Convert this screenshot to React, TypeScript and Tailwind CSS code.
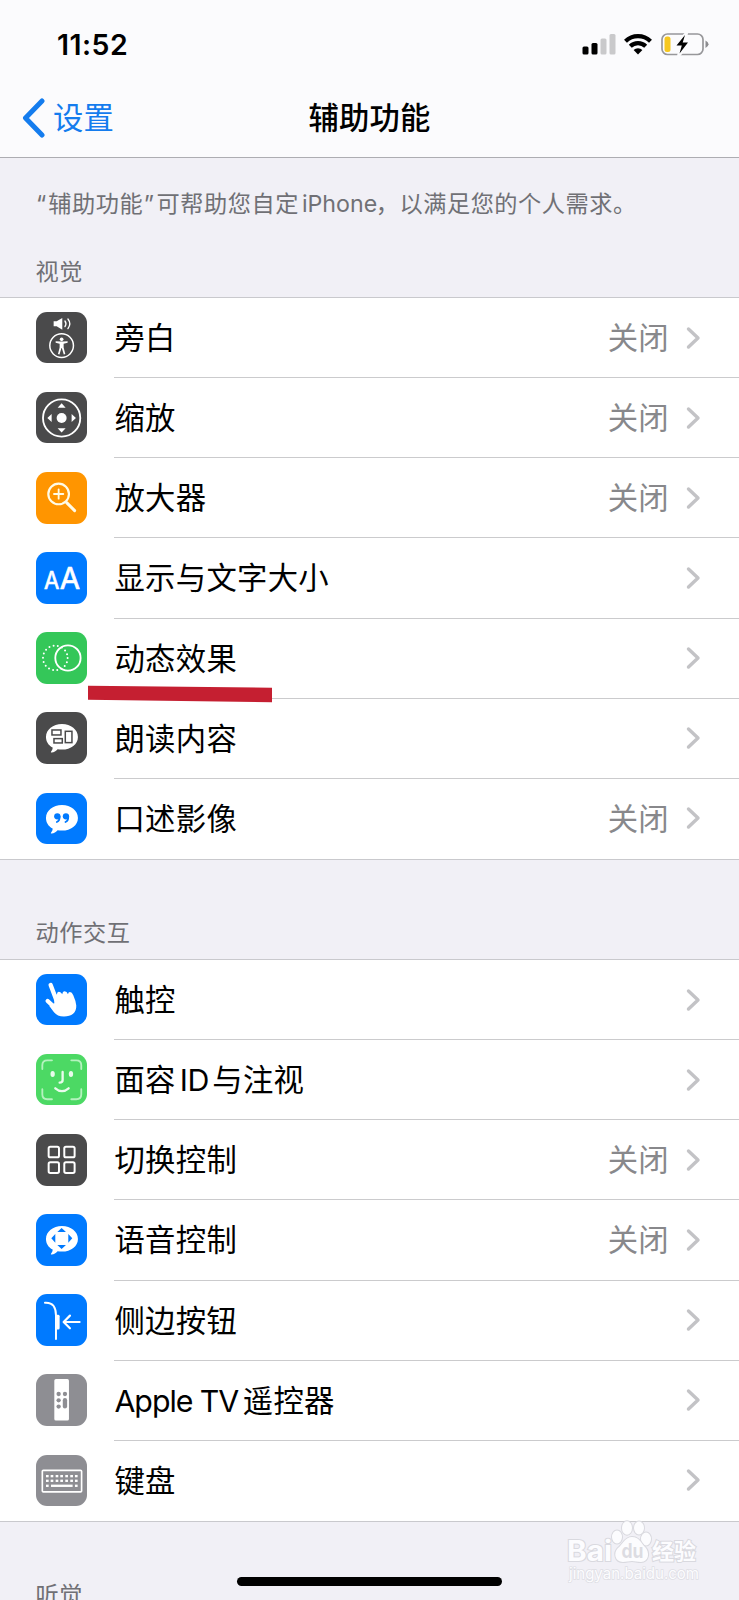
import type { ReactNode } from "react";
import clsx from "clsx";

interface SettingsRow {
  id: string;
  label: ReactNode;
  icon: ReactNode;
  iconClass: string;
  value?: string;
}

const DARK = "bg-[#4a4a4b]";
const BLUE = "bg-[#007aff]";
const GRAY = "bg-[#8e8e93]";

function Glyph({ children }: { children: ReactNode }) {
  return (
    <svg viewBox="0 0 155 155" className="size-full" fill="none" stroke="none">
      {children}
    </svg>
  );
}

function Bubble() {
  return (
    <path
      fill="#fff"
      d="M78 36C105 36 126 53 126 75s-21 38-48 38c-5 0-9 0-13-1-5 5-11 9-18 10-3 0-3-2-1-4 3-3 4-7 4-11C37 100 30 88 30 75c0-22 21-39 48-39Z"
    />
  );
}

const voiceOverIcon = (
  <Glyph>
    <path fill="#fff" d="M53 28h9l17-10v35L62 43h-9Z" />
    <path stroke="#fff" strokeWidth="4" strokeLinecap="round" d="M87 27q6 8 0 17M96 21q11 14 0 29" />
    <circle cx="77" cy="101" r="35.5" stroke="#fff" strokeWidth="4.500" />
    <circle cx="77" cy="82" r="5.500" fill="#fff" />
    <path fill="#fff" d="M59 88l14 1h8l14-1v4.500l-12 3v11l5 20-4.500 1-6-19h-1l-6 19-4.500-1 5-20v-11l-12-3Z" />
  </Glyph>
);

const zoomIcon = (
  <Glyph>
    <circle cx="77" cy="78" r="56" stroke="#fff" strokeWidth="5.500" />
    <circle cx="77" cy="78" r="15" fill="#fff" />
    <path fill="#fff" d="M77 34l12 13H65ZM77 122l12-13H65ZM34 78l13-12v24ZM120 78l-13-12v24Z" />
  </Glyph>
);

const magnifierIcon = (
  <Glyph>
    <circle cx="68" cy="66" r="31" stroke="#fffbe6" strokeWidth="6.500" />
    <path stroke="#fffbe6" strokeWidth="9" strokeLinecap="round" d="M92 92l24 24" />
    <path stroke="#fffbe6" strokeWidth="5.500" strokeLinecap="round" d="M54 66h28M68 52v28" />
  </Glyph>
);

const textSizeIcon = (
  <Glyph>
    <g fill="#fff" stroke="#fff" strokeWidth="2" className="font-['Inter'] tracking-normal">
      <text x="24" y="110" fontSize="71" textLength="46" lengthAdjust="spacingAndGlyphs">A</text>
      <text x="71" y="110" fontSize="89" textLength="61" lengthAdjust="spacingAndGlyphs">A</text>
    </g>
  </Glyph>
);

const motionIcon = (
  <Glyph>
    <circle cx="96" cy="78" r="38" stroke="#fff" strokeWidth="5.500" />
    <circle cx="58" cy="78" r="37" stroke="#fff" strokeWidth="6" strokeLinecap="round" strokeDasharray="0 12.92" />
  </Glyph>
);

const spokenIcon = (
  <Glyph>
    <Bubble />
    <g stroke="#4a4a4b" strokeWidth="4.500">
      <rect x="48" y="54" width="27" height="15" />
      <rect x="54" y="80" width="25" height="13" />
      <rect x="88" y="58" width="20" height="34" />
    </g>
  </Glyph>
);

const audioDescIcon = (
  <Glyph>
    <Bubble />
    <circle cx="64" cy="70" r="9.500" fill="#007aff" />
    <circle cx="90" cy="70" r="9.500" fill="#007aff" />
    <path stroke="#007aff" strokeWidth="5.500" strokeLinecap="round" d="M70.500 70q2 12-8 17M96.500 70q2 12-8 17" />
  </Glyph>
);

const touchIcon = (
  <Glyph>
    <path stroke="#fff" strokeWidth="13" strokeLinecap="round" d="M44 33l19 50M35 81l28 26" />
    <path
      fill="#fff"
      d="M55 58l8 4q0-9 6-9 6 0 10 8 1-9 7-9 7 0 10 9 1-7 6-7 6 0 10 10 8 18 9 31c1 22-14 33-37 33-14 0-23-5-30-13L40 96l15-8Z"
    />
  </Glyph>
);

const faceIcon = (
  <Glyph>
    <path
      stroke="#b5f2be"
      strokeWidth="5.500"
      strokeLinecap="round"
      d="M19 45V34q0-15 15-15h14M106 19h15q15 0 15 15v11M136 106v15q0 15-15 15h-15M48 136H34q-15 0-15-15v-15"
    />
    <ellipse cx="50" cy="60" rx="6.500" ry="9" fill="#e9fbec" />
    <ellipse cx="105" cy="60" rx="6.500" ry="9" fill="#e9fbec" />
    <path stroke="#e9fbec" strokeWidth="7" strokeLinecap="round" d="M80 54v24q0 8-9 8M58 103q20 17 40 0" />
  </Glyph>
);

const switchIcon = (
  <Glyph>
    <g stroke="#fff" strokeWidth="6">
      <rect x="38" y="38" width="31" height="32" rx="5" />
      <rect x="85" y="38" width="31" height="32" rx="5" />
      <rect x="38" y="85" width="31" height="32" rx="5" />
      <rect x="85" y="85" width="31" height="32" rx="5" />
    </g>
  </Glyph>
);

const voiceControlIcon = (
  <Glyph>
    <Bubble />
    <path fill="#007aff" d="M77 42l13 12H64ZM77 105l13-12H64ZM46 73l12-13v26ZM109 73L97 60v26Z" />
  </Glyph>
);

const sideButtonIcon = (
  <Glyph>
    <path stroke="#fff" strokeWidth="6" strokeLinecap="round" d="M27 26q18-1 26 10 7 10 7 28v71" />
    <path fill="#fff" d="M62 62h5q4 0 4 5v35q0 5-4 5h-5Z" />
    <path stroke="#fff" strokeWidth="6.500" strokeLinecap="round" strokeLinejoin="round" d="M131 84H84M102 65L83 84l19 19" />
  </Glyph>
);

const remoteIcon = (
  <Glyph>
    <rect x="55" y="15" width="44" height="125" rx="5" fill="#fff" />
    <g fill="#8e8e93">
      <circle cx="68" cy="60" r="6.500" />
      <circle cx="87" cy="60" r="6.500" />
      <circle cx="68" cy="79" r="6.500" />
      <circle cx="68" cy="98" r="6.500" />
      <rect x="80.500" y="72" width="13" height="32" rx="6.500" />
    </g>
  </Glyph>
);

const KEY_COLUMNS = [34, 48, 63, 77, 92, 107, 121];

const keyboardIcon = (
  <Glyph>
    <rect x="19" y="46" width="118" height="65" rx="3" stroke="#fff" strokeWidth="5" />
    <g fill="#fff">
      {KEY_COLUMNS.map((x) => (
        <g key={x}>
          <rect x={x - 4} y="60" width="8" height="7" />
          <rect x={x - 4} y="74" width="8" height="7" />
        </g>
      ))}
      <rect x="30" y="89" width="8" height="7" />
      <rect x="45" y="89" width="65" height="7" />
      <rect x="117" y="89" width="8" height="7" />
    </g>
  </Glyph>
);

const visionRows: SettingsRow[] = [
  { id: "voiceover", label: "旁白", icon: voiceOverIcon, iconClass: DARK, value: "关闭" },
  { id: "zoom", label: "缩放", icon: zoomIcon, iconClass: DARK, value: "关闭" },
  { id: "magnifier", label: "放大器", icon: magnifierIcon, iconClass: "bg-[#ff9500]", value: "关闭" },
  { id: "display", label: "显示与文字大小", icon: textSizeIcon, iconClass: BLUE },
  { id: "motion", label: "动态效果", icon: motionIcon, iconClass: "bg-[#34c759]" },
  { id: "spoken", label: "朗读内容", icon: spokenIcon, iconClass: DARK },
  { id: "audio", label: "口述影像", icon: audioDescIcon, iconClass: BLUE, value: "关闭" },
];

const motorRows: SettingsRow[] = [
  { id: "touch", label: "触控", icon: touchIcon, iconClass: BLUE },
  {
    id: "face",
    label: <>面容<span className="mr-[3.500px] ml-[4px] tracking-[-0.500px]">ID</span>与注视</>,
    icon: faceIcon,
    iconClass: "bg-[#4cd964]",
  },
  { id: "switch", label: "切换控制", icon: switchIcon, iconClass: DARK, value: "关闭" },
  { id: "voice", label: "语音控制", icon: voiceControlIcon, iconClass: BLUE, value: "关闭" },
  { id: "side", label: "侧边按钮", icon: sideButtonIcon, iconClass: BLUE },
  {
    id: "tv",
    label: <><span className="mr-[4.500px] tracking-[-1.050px]">Apple TV</span>遥控器</>,
    icon: remoteIcon,
    iconClass: GRAY,
  },
  { id: "keyboard", label: "键盘", icon: keyboardIcon, iconClass: GRAY },
];

function StatusBar() {
  return (
    <div className="flex h-[79px] items-start justify-between pt-[27px] pr-[30px] pl-[57px]">
      <span className="text-[28.500px] leading-[36px] font-semibold tracking-[0.450px]">11:52</span>
      <div className="flex items-center pt-[5px]">
        <svg width="34" height="24" viewBox="0 0 34 24" className="mr-[8px]">
          <rect x="0.500" y="14.500" width="6" height="8" rx="1.500" />
          <rect x="9.500" y="11" width="6" height="11.500" rx="1.500" />
          <rect x="18.500" y="6.500" width="6" height="16" rx="1.500" fill="#c9c9cb" />
          <rect x="27.500" y="2" width="6" height="20.500" rx="1.500" fill="#c9c9cb" />
        </svg>
        <svg width="28" height="24" viewBox="0 0 28 24" className="mr-[9px]" fill="none" stroke="#000">
          <path strokeWidth="4.200" d="M1.500 9.200a18 18 0 0 1 25 0" />
          <path strokeWidth="4.200" d="M6.300 14.200a11 11 0 0 1 15.400 0" />
          <path fill="#000" stroke="none" d="M9.600 18a6.400 6.400 0 0 1 8.800 0L14 22.500Z" />
        </svg>
        <svg width="48" height="24" viewBox="0 0 48 24">
          <rect x="1" y="2" width="41" height="20.500" rx="5.500" fill="none" stroke="#97979a" strokeWidth="1.700" />
          <rect x="3.500" y="4.500" width="6" height="15.500" rx="2.500" fill="#f6c71f" />
          <path d="M25.500 1L14.500 13.500h5.500L17.500 24 28.500 10.500h-5Z" fill="#fbfbfd" stroke="#fbfbfd" strokeWidth="3" />
          <path d="M24 3L15.500 13.500h5.300L18.500 21.500 27 10.500h-5.300Z" />
          <path d="M44.500 8.500q3 1.500 3 3.700t-3 3.700Z" fill="#8c8c90" />
        </svg>
      </div>
    </div>
  );
}

function NavBar() {
  return (
    <div className="grid h-[78px] grid-cols-[1fr_auto_1fr] items-center text-[30.350px] leading-[44px] tracking-[0.200px]">
      <div className="flex items-center pl-[22px] text-[#147cee]">
        <svg width="24" height="40" viewBox="0 0 24 40" fill="none" stroke="currentColor" className="mr-[7px]">
          <path strokeWidth="5" strokeLinecap="round" strokeLinejoin="round" d="M20 3L3.500 20 20 37" />
        </svg>
        <span>设置</span>
      </div>
      <h1 className="font-medium">辅助功能</h1>
    </div>
  );
}

function Row({ row, last }: { row: SettingsRow; last: boolean }) {
  return (
    <li className="flex h-[80.150px] items-center pl-[35.700px]">
      <div className={clsx("mb-[1.200px] size-[51.600px] shrink-0 overflow-hidden rounded-[11px]", row.iconClass)}>
        {row.icon}
      </div>
      <div
        className={clsx(
          "ml-[26.700px] flex h-full flex-1 items-center border-b pr-[38px] pl-[0.500px] text-[30.350px] leading-[44px] tracking-[0.300px]",
          last ? "border-transparent" : "border-[#cbcbcd]",
        )}
      >
        <span className="flex-1 pt-[1px]">{row.label}</span>
        {row.value && <span className="pt-[1px] text-[#88888b]">{row.value}</span>}
        <svg width="16" height="24" viewBox="0 0 16 24" fill="none" className="ml-[16px]">
          <path stroke="#c3c3c6" strokeWidth="3.400" strokeLinecap="round" strokeLinejoin="round" d="M3.500 3L13 12l-9.500 9" />
        </svg>
      </div>
    </li>
  );
}

function Section({ rows, children }: { rows: SettingsRow[]; children?: ReactNode }) {
  return (
    <ul className="relative border-y border-[#c9c9cd] bg-white">
      {rows.map((row, i) => (
        <Row key={row.id} row={row} last={i === rows.length - 1} />
      ))}
      {children}
    </ul>
  );
}

function Watermark() {
  return (
    <div className="absolute top-[1520px] left-[560px] h-[68px] w-[150px]">
      <svg width="150" height="68" viewBox="-6 0 150 68" className="font-['Inter','Noto_Sans_CJK_SC',sans-serif]">
        <g stroke="#d9d9df" strokeWidth="2" paintOrder="stroke" fill="#fcfcfe">
          <text x="1" y="40.500" fontSize="28" fontWeight="700" textLength="45" lengthAdjust="spacingAndGlyphs">Bai</text>
          <ellipse cx="51" cy="17" rx="5" ry="6.500" />
          <ellipse cx="61" cy="8" rx="5" ry="6.700" />
          <ellipse cx="73" cy="8" rx="5" ry="6.500" />
          <ellipse cx="80" cy="19" rx="5" ry="6.500" />
          <path d="M66 17c7 0 9 6 13 10 5 5 4 15-4 15-4 0-6-1-9-1s-6 1-9 1c-8 0-10-9-5-14 5-4 7-11 14-11Z" />
          <text x="86" y="39" fontSize="22" fontWeight="700">经验</text>
          <text x="3" y="58.500" fontSize="16" strokeWidth="1.500" stroke="#dedee4" textLength="130" lengthAdjust="spacingAndGlyphs">jingyan.baidu.com</text>
        </g>
        <text x="55.500" y="38" fontSize="20" fontWeight="700" fill="#dcdce2" textLength="22" lengthAdjust="spacingAndGlyphs">du</text>
      </svg>
    </div>
  );
}

export default function App() {
  return (
    <div className="relative h-[1600px] w-[739px] overflow-hidden bg-[#f1f0f6] font-['Inter','Noto_Sans_CJK_SC',sans-serif] text-black">
      <header className="h-[158px] border-b border-[#adadb2] bg-[#fbfbfd]">
        <StatusBar />
        <NavBar />
      </header>

      <main className="text-[23.200px] leading-[34px] tracking-[0.550px] text-[#707075]">
        <p className="pt-[29px] pl-[36px] whitespace-nowrap">
          <span className="mr-[1.500px]">“</span>辅助功能<span className="mr-[2px] ml-[0.500px]">”</span>可帮助您自定
          <span className="mr-[-1.500px] ml-[3px] tracking-[0px]">iPhone</span>，以满足您的个人需求。
        </p>
        <h2 className="h-[76px] pt-[34px] pl-[35.500px]">视觉</h2>
        <div className="text-black">
          <Section rows={visionRows}>
            {/* Hand-drawn marker under 动态效果 */}
            <svg className="absolute top-[387px] left-[88px]" width="184" height="18" viewBox="0 0 184 18">
              <path fill="#c51f31" d="M0 0.700L184 2.700V17.300L0 14.700Z" />
            </svg>
          </Section>
        </div>
        <h2 className="h-[99px] pt-[56px] pl-[35.500px]">动作交互</h2>
        <div className="text-black">
          <Section rows={motorRows} />
        </div>
        <h2 className="pt-[56px] pl-[35.500px]">听觉</h2>
      </main>

      <Watermark />
      <div className="absolute bottom-[14px] left-[237px] h-[9px] w-[265px] rounded-full bg-black" />
    </div>
  );
}
